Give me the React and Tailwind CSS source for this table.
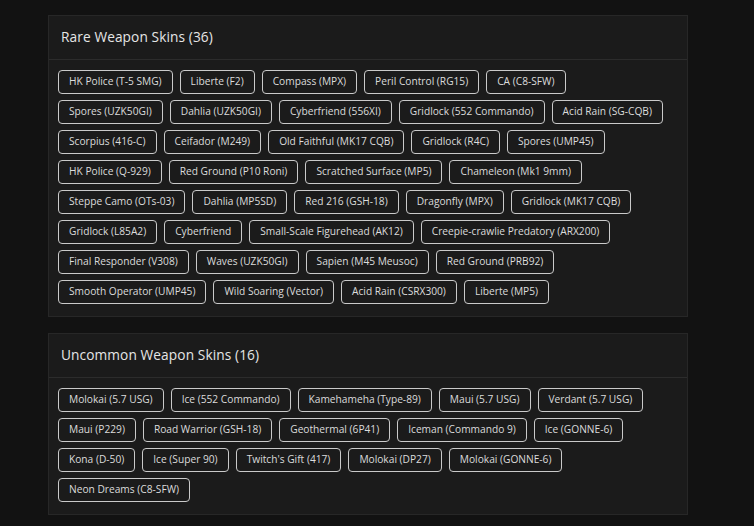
const rare = [
  ['HK Police (T-5 SMG)', 'Liberte (F2)', 'Compass (MPX)', 'Peril Control (RG15)', 'CA (C8-SFW)'],
  ['Spores (UZK50GI)', 'Dahlia (UZK50GI)', 'Cyberfriend (556XI)', 'Gridlock (552 Commando)', 'Acid Rain (SG-CQB)'],
  ['Scorpius (416-C)', 'Ceifador (M249)', 'Old Faithful (MK17 CQB)', 'Gridlock (R4C)', 'Spores (UMP45)'],
  ['HK Police (Q-929)', 'Red Ground (P10 Roni)', 'Scratched Surface (MP5)', 'Chameleon (Mk1 9mm)'],
  ['Steppe Camo (OTs-03)', 'Dahlia (MP5SD)', 'Red 216 (GSH-18)', 'Dragonfly (MPX)', 'Gridlock (MK17 CQB)'],
  ['Gridlock (L85A2)', 'Cyberfriend', 'Small-Scale Figurehead (AK12)', 'Creepie-crawlie Predatory (ARX200)'],
  ['Final Responder (V308)', 'Waves (UZK50GI)', 'Sapien (M45 Meusoc)', 'Red Ground (PRB92)'],
  ['Smooth Operator (UMP45)', 'Wild Soaring (Vector)', 'Acid Rain (CSRX300)', 'Liberte (MP5)'],
];

const uncommon = [
  ['Molokai (5.7 USG)', 'Ice (552 Commando)', 'Kamehameha (Type-89)', 'Maui (5.7 USG)', 'Verdant (5.7 USG)'],
  ['Maui (P229)', 'Road Warrior (GSH-18)', 'Geothermal (6P41)', 'Iceman (Commando 9)', 'Ice (GONNE-6)'],
  ['Kona (D-50)', 'Ice (Super 90)', "Twitch's Gift (417)", 'Molokai (DP27)', 'Molokai (GONNE-6)'],
  ['Neon Dreams (C8-SFW)'],
];

function SkinPanel({ title, rows }) {
  return (
    <section className="bg-[#1b1b1b] border border-[#272727]">
      <div className="h-[44px] flex items-center px-[12px] border-b border-[#2c2c2c]">
        <h2 className="text-[13.7px] font-medium text-[#e6e6e6] tracking-[0.1px]">{title}</h2>
      </div>
      <div className="flex flex-col gap-[6px] px-[9px] pt-[10px] pb-[12px]">
        {rows.map((row, r) => (
          <div key={r} className="flex gap-[7px]">
            {row.map((s) => (
              <span
                key={s}
                className="h-[24px] flex items-center px-[10px] rounded-[4px] border border-[#cacaca] text-[10.2px] text-[#dcdcdc] whitespace-nowrap"
              >
                {s}
              </span>
            ))}
          </div>
        ))}
      </div>
    </section>
  );
}

export default function App() {
  return (
    <div className="min-h-[526px] bg-[#121212] pt-[15px] pb-[12px] font-['Open_Sans',sans-serif]">
      <div className="ml-[48px] w-[640px] flex flex-col gap-[16px]">
        <SkinPanel title="Rare Weapon Skins (36)" rows={rare} />
        <SkinPanel title="Uncommon Weapon Skins (16)" rows={uncommon} />
      </div>
    </div>
  );
}
